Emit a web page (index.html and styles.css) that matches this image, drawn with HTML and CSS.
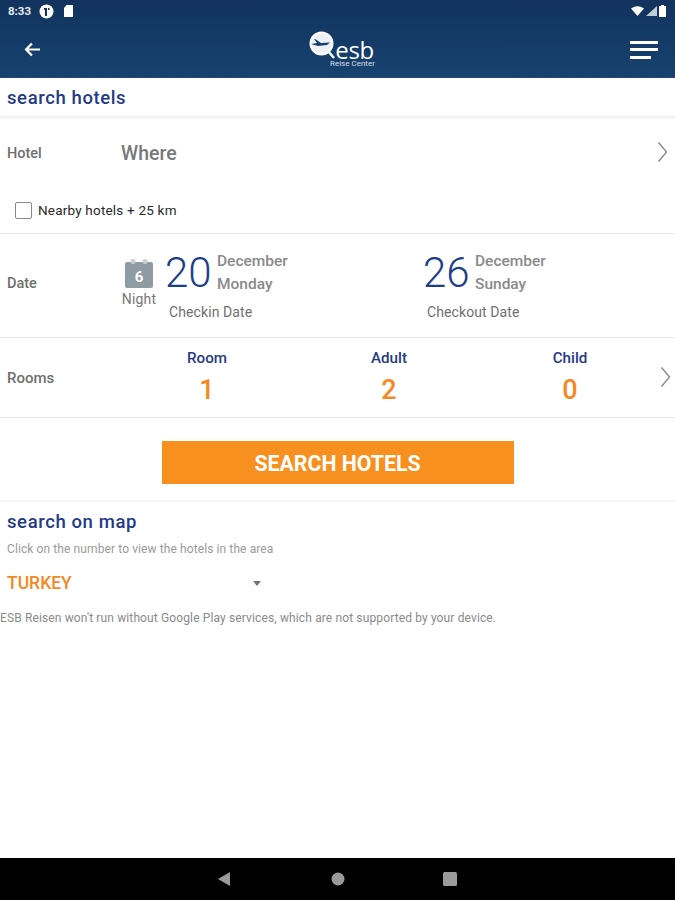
FILE: index.html
```html
<!DOCTYPE html>
<html lang="en">
<head>
<meta charset="utf-8">
<title>Search hotels</title>
<link rel="stylesheet" href="styles.css">
</head>
<body>
<div class="app">
  <header class="header">
    <div class="status">
      <div class="status-left">
        <span class="time">8:33</span>
        <svg class="st-icon" width="15" height="15" viewBox="0 0 15 15"><circle cx="7.500" cy="7.500" r="7" fill="#fff"/><path d="M5 4h3v8H6V6H5zM9 4h1.500v2H9z" fill="#12345f"/></svg>
        <svg class="st-icon" width="11" height="14" viewBox="0 0 11 14"><path d="M3.500 1H10v12H1V4z" fill="#fff"/></svg>
      </div>
      <div class="status-right">
        <svg width="13" height="10" viewBox="0 0 13 10"><path d="M0 2.500Q6.500-2 13 2.500L6.500 10z" fill="#fff"/></svg>
        <svg width="11" height="10" viewBox="0 0 11 10"><path d="M11 0v10H0z" fill="#c3ccd6"/></svg>
        <svg width="7" height="12" viewBox="0 0 7 12"><path d="M2 1V0h3v1h2v11H0V1z" fill="#fff"/></svg>
      </div>
    </div>
    <div class="toolbar">
      <svg class="back" width="17" height="15" viewBox="0 0 17 15"><path d="M8 1.500 2 7.500l6 6M2 7.500h14" fill="none" stroke="#fff" stroke-width="2.200"/></svg>
      <div class="logo">
        <svg class="logo-mark" width="30" height="30" viewBox="0 0 30 30">
          <circle cx="13.500" cy="12.500" r="11" fill="#eef1f5" stroke="#fff" stroke-width="2"/>
          <path d="M20 20l6 7" stroke="#fff" stroke-width="2.500"/>
          <path d="M3 13l6-1-3-4 2 .5 5 3.500 9-.5-3 2.500-9 1z" fill="#17426f"/>
        </svg>
        <div class="logo-text">
          <span class="logo-esb">esb</span>
          <span class="logo-sub">Reise Center</span>
        </div>
      </div>
      <div class="menu"><i class="bar"></i><i class="bar"></i><i class="bar bar-short"></i></div>
    </div>
  </header>

  <main class="content">
    <h2 class="title title-hotels">search hotels</h2>

    <section class="hotel">
      <div class="hotel-row">
        <span class="label label-hotel">Hotel</span>
        <span class="where">Where</span>
        <svg class="chev" width="11" height="22" viewBox="0 0 11 22"><path d="M1.500 1.500 9.500 11l-8 9.500" fill="none" stroke="#8a8a8a" stroke-width="1.400"/></svg>
      </div>
      <label class="nearby"><span class="check"></span><span>Nearby hotels + 25 km</span></label>
    </section>

    <section class="date-row">
      <span class="label">Date</span>
      <div class="night">
        <svg width="30" height="30" viewBox="0 0 30 30">
          <rect x="1" y="3" width="28" height="26" rx="2" fill="#8f9ba3"/>
          <circle cx="9" cy="2.500" r="2.500" fill="#c9cfd3"/><circle cx="21" cy="2.500" r="2.500" fill="#c9cfd3"/>
          <text x="15" y="23" text-anchor="middle" class="cal-num">6</text>
        </svg>
        <span class="night-label">Night</span>
      </div>
      <div class="date date-in">
        <div class="date-top">
          <span class="day">20</span>
          <div class="date-meta"><span>December</span><span>Monday</span></div>
        </div>
        <span class="date-cap">Checkin Date</span>
      </div>
      <div class="date date-out">
        <div class="date-top">
          <span class="day">26</span>
          <div class="date-meta"><span>December</span><span>Sunday</span></div>
        </div>
        <span class="date-cap">Checkout Date</span>
      </div>
    </section>

    <section class="rooms">
      <span class="label label-rooms">Rooms</span>
      <div class="count count-room"><span class="count-label">Room</span><span class="count-val">1</span></div>
      <div class="count count-adult"><span class="count-label">Adult</span><span class="count-val">2</span></div>
      <div class="count count-child"><span class="count-label">Child</span><span class="count-val">0</span></div>
      <svg class="chev chev-rooms" width="11" height="22" viewBox="0 0 11 22"><path d="M1.500 1.500 9.500 11l-8 9.500" fill="none" stroke="#8a8a8a" stroke-width="1.400"/></svg>
    </section>

    <div class="cta"><button class="search-btn" type="button">SEARCH HOTELS</button></div>

    <section class="map">
      <h2 class="title title-map">search on map</h2>
      <p class="hint">Click on the number to view the hotels in the area</p>
      <div class="country"><span>TURKEY</span><i class="caret"></i></div>
      <p class="warn">ESB Reisen won't run without Google Play services, which are not supported by your device.</p>
    </section>
  </main>

  <nav class="navbar">
    <svg width="14" height="16" viewBox="0 0 14 16"><path d="M13 1v14L1 8z" fill="#9a9a9a"/></svg>
    <svg class="nav-home" width="14" height="14" viewBox="0 0 14 14"><circle cx="7" cy="7" r="6.500" fill="#9a9a9a"/></svg>
    <svg width="14" height="14" viewBox="0 0 14 14"><rect width="14" height="14" rx="1.500" fill="#9a9a9a"/></svg>
  </nav>
</div>
</body>
</html>
```

FILE: styles.css
```css
* { box-sizing: border-box; }
html, body { margin: 0; padding: 0; }
body { font-family: Roboto, "Liberation Sans", sans-serif; background: #fff; }
.app { width: 675px; height: 900px; display: flex; flex-direction: column; overflow: hidden; }

.header { height: 78px; flex: none; background: linear-gradient(#11335e, #17426f); border-bottom: 1px solid #2b4a6e; }
.status { height: 24px; padding: 0 9px 2px 8px; display: flex; justify-content: space-between; align-items: center; }
.status-left { display: flex; align-items: center; gap: 9px; }
.time { color: #e8ecf0; font-size: 11.500px; font-weight: 700; width: 22px; white-space: nowrap; }
.status-right { display: flex; align-items: center; gap: 2px; }
.toolbar { height: 53px; display: flex; align-items: center; justify-content: space-between; padding: 0 17px 3px 24px; position: relative; }
.logo { position: absolute; left: 308px; top: 7px; width: 66px; height: 38px; display: flex; }
.logo-mark { flex: none; }
.logo-text { display: flex; flex-direction: column; align-items: flex-end; margin-left: -8px; color: #fff; padding-top: 9px; flex: 1; }
.logo-esb { font-family: "Open Sans", sans-serif; font-size: 24px; font-weight: 400; line-height: 20px; letter-spacing: -0.300px; margin-right: 1px; }
.logo-sub { font-size: 8px; line-height: 8px; white-space: nowrap; color: #d6deea; }
.menu { display: flex; flex-direction: column; gap: 4.500px; width: 28px; margin-top: 1px; }
.bar { display: block; height: 3px; background: #fff; }
.bar-short { width: 21px; }

.content { flex: 1; min-height: 0; }
.title { margin: 0; color: #253a86; font-size: 18.500px; font-weight: 500; letter-spacing: 0.600px; padding-left: 7px; }
.title-hotels { height: 37px; line-height: 41px; }
.hotel { border-top: 4px solid #f6f6f6; height: 119px; border-bottom: 1px solid #e6e6e6; }
.hotel-row { height: 66px; display: flex; align-items: center; padding: 2px 0 0 7px; position: relative; }
.label { color: #6f6f6f; font-size: 14.500px; font-weight: 500; }
.label-hotel { width: 114px; }
.where { color: #787878; font-size: 19.500px; font-weight: 500; }
.chev { position: absolute; right: 7px; top: 22px; }
.nearby { display: flex; align-items: center; gap: 6px; padding-left: 15px; margin-top: 2px; height: 46px; color: #2a2a2a; font-size: 13.500px; font-weight: 400; letter-spacing: 0.200px; }
.check { width: 17px; height: 17px; border: 1.500px solid #888; border-radius: 2px; }

.date-row { height: 104px; border-bottom: 1px solid #e6e6e6; position: relative; padding: 0 0 6px 7px; display: flex; align-items: center; }
.date-row > .label { width: 114px; margin-top: 2px; }
.night { width: 36px; display: flex; flex-direction: column; align-items: center; }
.night-label { color: #777; font-size: 14px; font-weight: 400; margin-top: 2px; letter-spacing: 0.200px; }
.cal-num { fill: #fff; font-size: 15px; font-weight: 700; font-family: Roboto, sans-serif; }
.date { display: flex; flex-direction: column; margin-bottom: 2px; }
.date-in { margin-left: 8px; width: 258px; }
.date-top { display: flex; align-items: center; gap: 7px; height: 58px; }
.day { color: #1d3f88; font-size: 42px; font-weight: 300; line-height: 48px; width: 45px; }
.date-meta { display: flex; flex-direction: column; color: #8a8a8a; font-size: 15.500px; font-weight: 500; line-height: 23px; }
.date-cap { color: #707070; font-size: 14px; margin: 2px 0 0 4px; letter-spacing: 0.100px; }

.rooms { height: 80px; border-bottom: 1px solid #e8e8e8; position: relative; display: grid; grid-template-columns: 114px 172px 192px 170px; padding: 3px 0 0 7px; align-items: center; }
.label-rooms { font-size: 15px; margin-top: -2px; }
.count { display: flex; flex-direction: column; align-items: center; }
.count-label { color: #253a86; font-size: 15.200px; font-weight: 500; line-height: 20px; }
.count-val { color: #f5891f; font-size: 27px; font-weight: 500; line-height: 40px; margin-top: 2px; }
.chev-rooms { right: 4px; top: 28px; }

.cta { height: 84px; border-bottom: 2px solid #f5f5f5; padding-top: 23px; display: flex; justify-content: center; }
.search-btn { width: 352px; height: 43px; border: 0; background: #f7901e; color: #fff; font: 700 21.300px Roboto, sans-serif; padding: 2px 0 0; }

.map { height: 120px; }
.title-map { line-height: 40px; height: 40px; }
.hint { margin: 0; padding-left: 7px; color: #9a9a9a; font-size: 12px; line-height: 14px; letter-spacing: 0.100px; }
.country { display: flex; align-items: center; margin-top: 17px; padding-left: 7px; color: #f5891f; font-size: 17.500px; font-weight: 500; height: 20px; width: 261px; justify-content: space-between; }
.caret { width: 0; height: 0; border: 4.500px solid transparent; border-top: 5px solid #757575; border-bottom: 0; }
.warn { margin: 18px 0 0; color: #8a8a8a; font-size: 12px; line-height: 14px; letter-spacing: 0.130px; white-space: nowrap; }

.navbar { height: 42px; flex: none; background: #000; display: grid; grid-template-columns: 14px 14px 14px; justify-content: start; column-gap: 99px; align-items: center; padding-left: 217px; }
.nav-home { margin-left: 1px; }
```
